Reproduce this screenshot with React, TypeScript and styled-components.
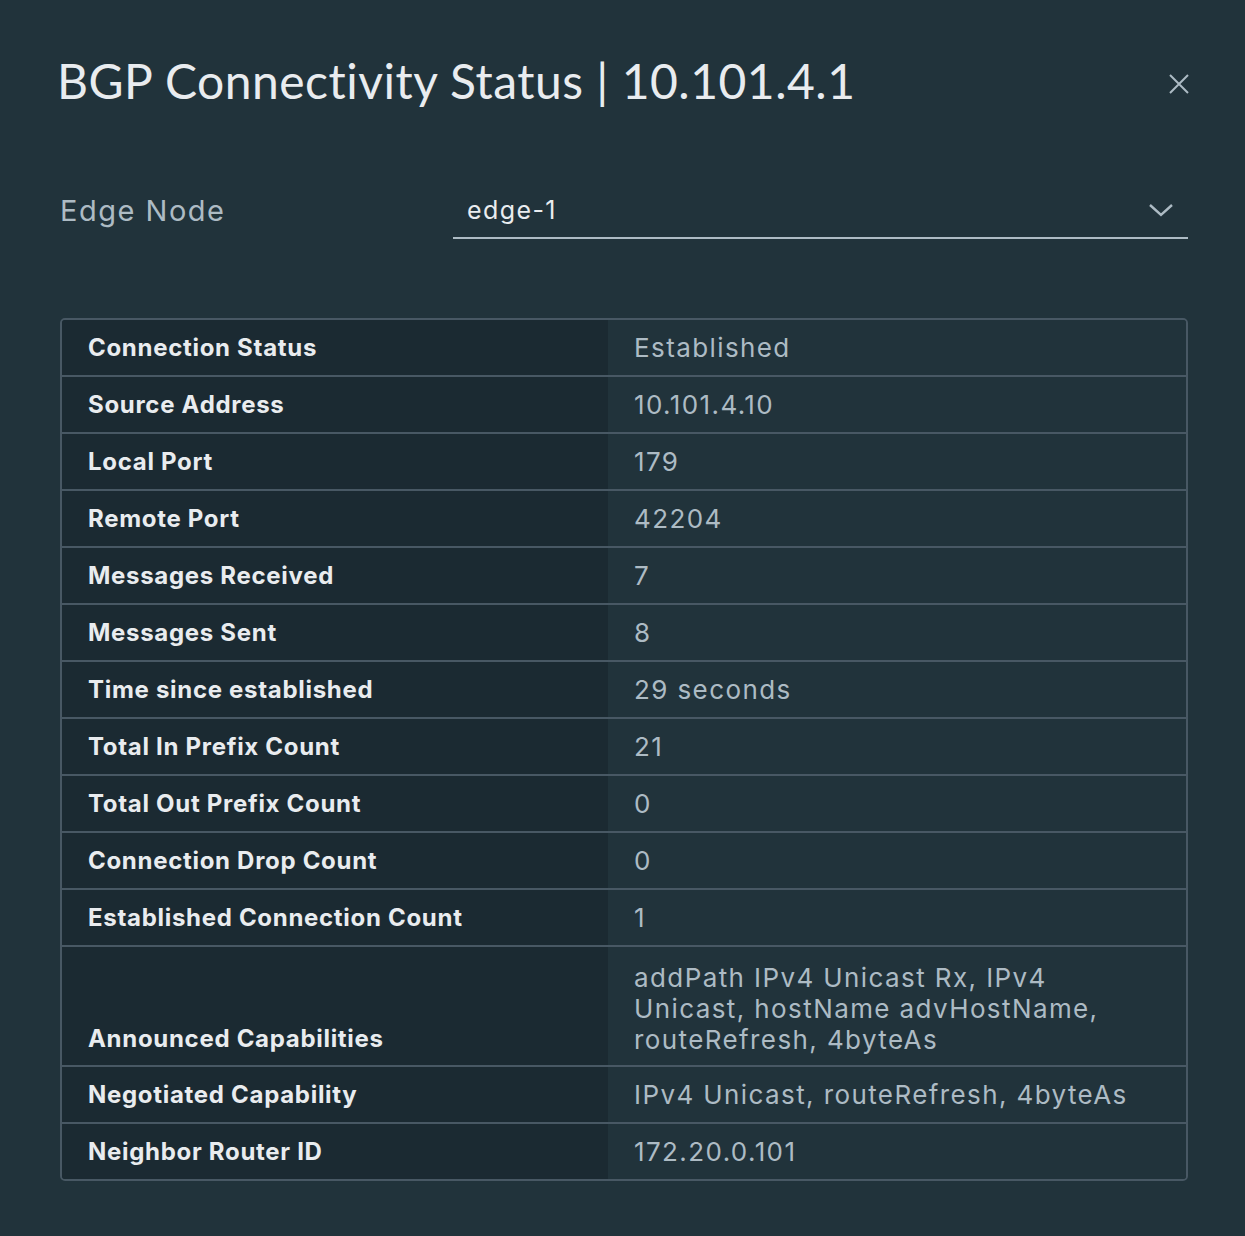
import React from "react";
import styled, { createGlobalStyle } from "styled-components";

const GlobalStyle = createGlobalStyle`
	html, body {
		margin: 0;
		padding: 0;
		background: #21333b;
	}
	body {
		font-family: Lato, "Liberation Sans", sans-serif;
	}
`;

const StyledModal = styled.div`
	width: 1245px;
	height: 1236px;
	box-sizing: border-box;
	padding: 52px 57px 0 60px;
	background: #21333b;
	color: #e9ecef;

	.header {
		display: flex;
		align-items: center;
		justify-content: space-between;
		height: 60px;
	}

	.header h2 {
		margin: -4px 0 0 -3px;
		font-size: 48px;
		font-weight: 400;
		letter-spacing: 0.5px;
		color: #e9ecef;
	}
`;

const CloseButton = styled.button`
	width: 28px;
	height: 28px;
	padding: 0;
	border: none;
	background: transparent;
	display: flex;
	align-items: center;
	justify-content: center;
	margin-right: -5px;
	margin-top: 4px;
	cursor: pointer;
`;

const FieldRow = styled.div`
	display: grid;
	grid-template-columns: 393px 1fr;
	align-items: center;
	margin-top: 71px;
	height: 56px;
	font-family: Inter, "Open Sans", sans-serif;
`;

const FieldLabel = styled.label`
	font-size: 29px;
	letter-spacing: 1.5px;
	color: #adbbc4;
	padding-bottom: 2px;
`;

const SelectBox = styled.div`
	display: flex;
	align-items: center;
	justify-content: space-between;
	height: 56px;
	border-bottom: 2px solid #adbbc4;
	padding: 0 14px;
	font-size: 25px;
	letter-spacing: 1.4px;
	color: #e9ecef;
	box-sizing: border-box;
`;

const Grid = styled.table`
	margin-top: 79px;
	width: 100%;
	border-collapse: separate;
	border-spacing: 0;
	border: 2px solid #485864;
	border-radius: 5px;
	overflow: hidden;
	box-sizing: border-box;
	font-family: Inter, "Open Sans", sans-serif;

	th, td {
		padding: 0 26px;
		height: 55px;
		border-bottom: 2px solid #485864;
		text-align: left;
	}

	tr:last-child th, tr:last-child td {
		border-bottom: none;
	}

	th {
		width: 494px;
		background: #1b2a32;
		color: #e9ecef;
		font-size: 24px;
		font-weight: 700;
		letter-spacing: 0.7px;
		vertical-align: middle;
	}

	td {
		background: #21333b;
		color: #adbbc4;
		font-size: 26px;
		letter-spacing: 1.4px;
		line-height: 31px;
		vertical-align: middle;
	}
`;

const MultiRow = styled.tr`
	th {
		vertical-align: bottom;
		padding-bottom: 12px;
	}
	td {
		padding-top: 15px;
		padding-bottom: 10px;
		vertical-align: top;
	}
`;

const rows: [string, string][] = [
	["Connection Status", "Established"],
	["Source Address", "10.101.4.10"],
	["Local Port", "179"],
	["Remote Port", "42204"],
	["Messages Received", "7"],
	["Messages Sent", "8"],
	["Time since established", "29 seconds"],
	["Total In Prefix Count", "21"],
	["Total Out Prefix Count", "0"],
	["Connection Drop Count", "0"],
	["Established Connection Count", "1"],
];

export default function App() {
	return (
		<>
			<GlobalStyle />
			<StyledModal>
				<div className="header">
					<h2>BGP Connectivity Status | 10.101.4.1</h2>
					<CloseButton aria-label="close">
						<svg width="22" height="22" viewBox="0 0 22 22">
							<path d="M2 2 L20 20 M20 2 L2 20" stroke="#adbbc4" strokeWidth="2" />
						</svg>
					</CloseButton>
				</div>
				<FieldRow>
					<FieldLabel>Edge Node</FieldLabel>
					<SelectBox>
						<span>edge-1</span>
						<svg width="26" height="16" viewBox="0 0 26 16">
							<path d="M2 3 L13 13 L24 3" fill="none" stroke="#adbbc4" strokeWidth="2.4" />
						</svg>
					</SelectBox>
				</FieldRow>
				<Grid>
					<tbody>
						{rows.map(([k, v]) => (
							<tr key={k}>
								<th>{k}</th>
								<td>{v}</td>
							</tr>
						))}
						<MultiRow>
							<th>Announced Capabilities</th>
							<td>addPath IPv4 Unicast Rx, IPv4<br />Unicast, hostName advHostName,<br />routeRefresh, 4byteAs</td>
						</MultiRow>
						<tr>
							<th>Negotiated Capability</th>
							<td>IPv4 Unicast, routeRefresh, 4byteAs</td>
						</tr>
						<tr>
							<th>Neighbor Router ID</th>
							<td>172.20.0.101</td>
						</tr>
					</tbody>
				</Grid>
			</StyledModal>
		</>
	);
}
